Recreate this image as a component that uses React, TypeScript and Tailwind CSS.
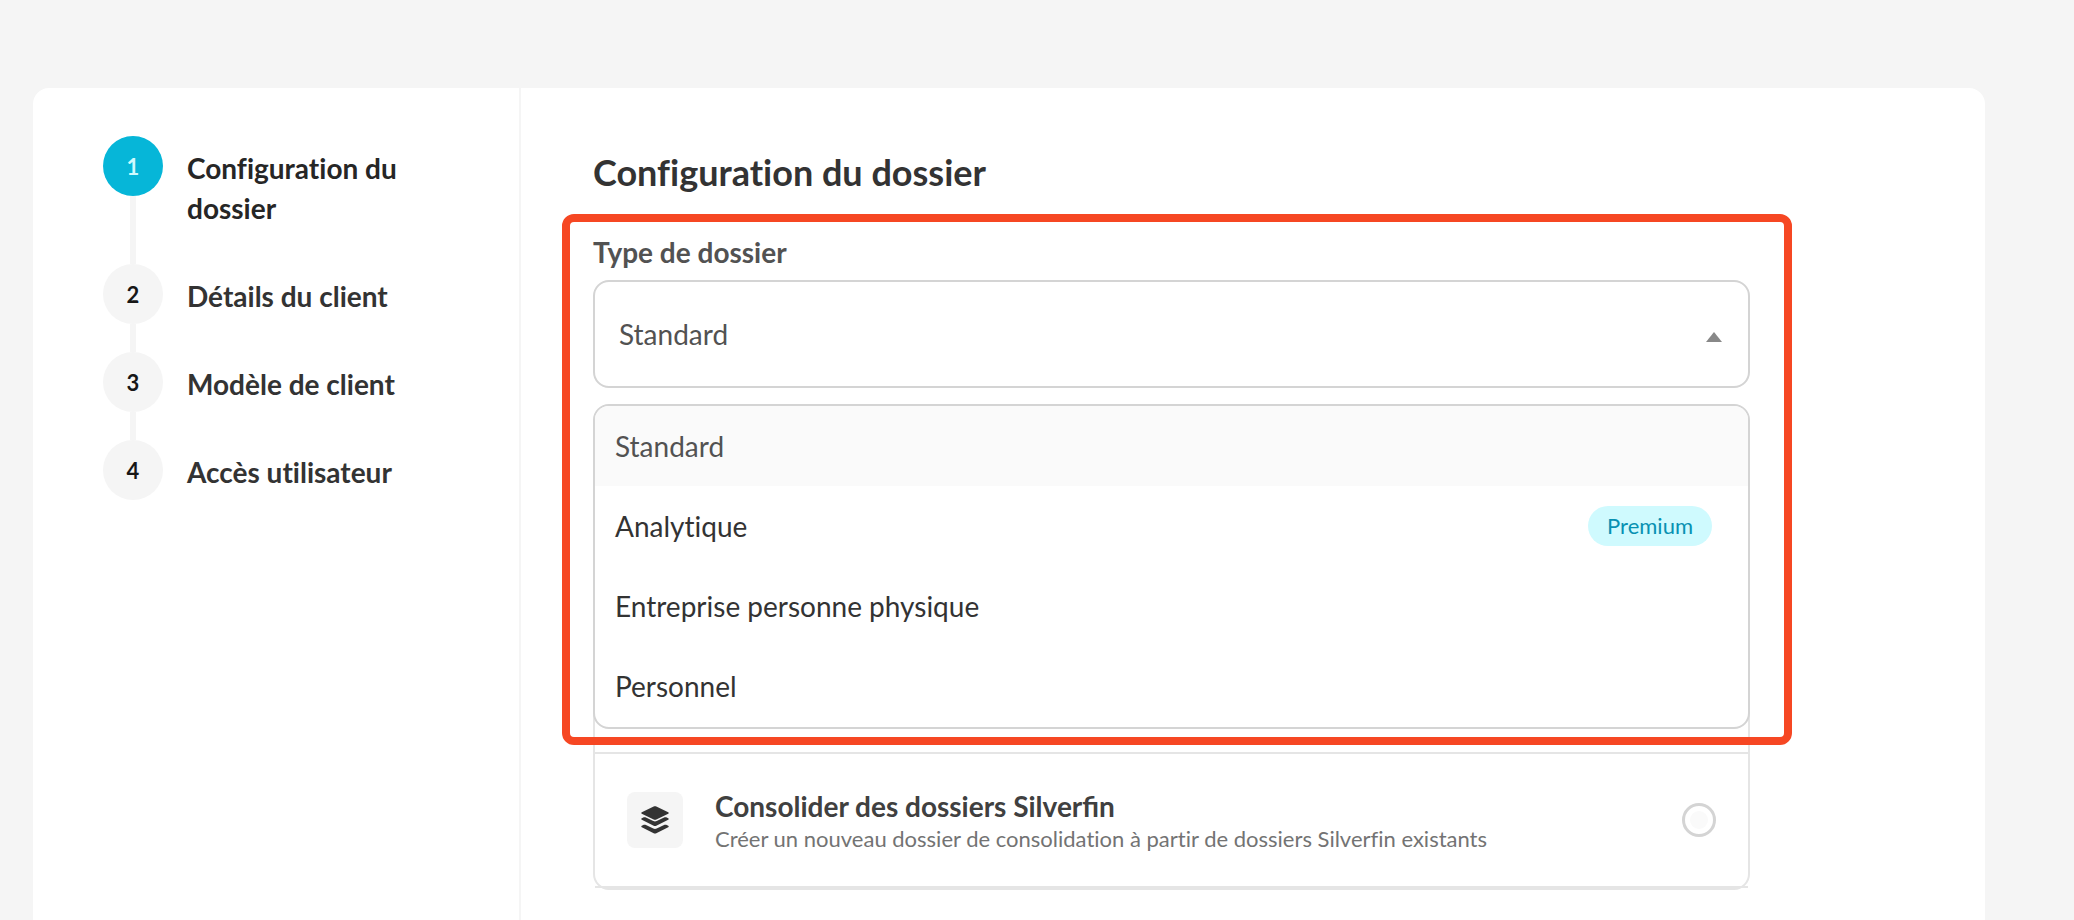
import { useState } from "react";

type FileType = {
  id: string;
  label: string;
  premium?: boolean;
};

const STEPS = [
  "Configuration du dossier",
  "Détails du client",
  "Modèle de client",
  "Accès utilisateur",
];

const FILE_TYPES: FileType[] = [
  { id: "standard", label: "Standard" },
  { id: "analytique", label: "Analytique", premium: true },
  { id: "entreprise", label: "Entreprise personne physique" },
  { id: "personnel", label: "Personnel" },
];

function LayersIcon() {
  return (
    <svg width="28" height="28" viewBox="0 0 28 28" fill="#333333" aria-hidden="true">
      <path d="M13.2 0.3a2 2 0 0 1 1.6 0l12.4 5.9a0.9 0.9 0 0 1 0 1.6l-12.4 5.9a2 2 0 0 1-1.6 0L0.8 7.8a0.9 0.9 0 0 1 0-1.6z" />
      <path d="M0.8 12.2l2-0.9a2 2 0 0 1 1.6 0l7.9 3.7a4 4 0 0 0 3.4 0l7.9-3.7a2 2 0 0 1 1.6 0l2 0.9a0.9 0.9 0 0 1 0 1.6l-12.4 6.1a2 2 0 0 1-1.6 0L0.8 13.8a0.9 0.9 0 0 1 0-1.6z" />
      <path d="M0.8 19.7l2-0.9a2 2 0 0 1 1.6 0l7.9 3.7a4 4 0 0 0 3.4 0l7.9-3.7a2 2 0 0 1 1.6 0l2 0.9a0.9 0.9 0 0 1 0 1.6l-12.4 6.1a2 2 0 0 1-1.6 0L0.8 21.3a0.9 0.9 0 0 1 0-1.6z" />
    </svg>
  );
}

function Stepper({ current }: { current: number }) {
  return (
    <ol className="flex flex-col">
      {STEPS.map((label, i) => (
        <li key={label} className="flex gap-6">
          <div className="flex flex-col items-center">
            <div
              className={
                i === current
                  ? "flex size-[60px] items-center justify-center rounded-full bg-[#06b6d8] text-[22px] font-bold text-[#cffafe]"
                  : "flex size-[60px] items-center justify-center rounded-full bg-[#f5f5f5] text-[22px] font-bold text-[#171717]"
              }
            >
              {i + 1}
            </div>
            {i < STEPS.length - 1 && <div className="w-1.5 flex-1 bg-[#f5f5f5]" />}
          </div>
          <div
            className={
              i === current
                ? "max-w-60 pt-3 pb-9 text-[28px] leading-10 font-bold text-[#262626]"
                : "max-w-60 pt-3 pb-9 text-[28px] leading-10 font-bold text-[#333333]"
            }
          >
            {label}
          </div>
        </li>
      ))}
    </ol>
  );
}

function FileTypeSelect() {
  const [value, setValue] = useState("standard");
  const [open, setOpen] = useState(true);

  return (
    <div className="relative z-10">
      <label
        htmlFor="file-type"
        className="block pb-2 text-[28px] leading-10 font-bold text-[#525252]"
      >
        Type de dossier
      </label>

      <div className="relative">
        <select
          id="file-type"
          value={value}
          onChange={(e) => setValue(e.target.value)}
          onMouseDown={(e) => {
            // the custom list below replaces the native popup
            e.preventDefault();
            setOpen(!open);
          }}
          className="block h-[108px] w-full appearance-none rounded-2xl border-2 border-[#d4d4d4] bg-white px-6 text-[28px] text-[#525252]"
        >
          {FILE_TYPES.map((t) => (
            <option key={t.id} value={t.id}>
              {t.label}
            </option>
          ))}
        </select>
        <svg
          width="16"
          height="10"
          viewBox="0 0 16 10"
          fill="#888888"
          aria-hidden="true"
          className="pointer-events-none absolute right-7 bottom-[46px]"
        >
          <path d={open ? "M8 0l8 10H0z" : "M0 0h16L8 10z"} />
        </svg>

        {open && (
          <ul
            role="listbox"
            className="absolute top-full right-0 left-0 mt-4 overflow-hidden rounded-2xl border-2 border-[#d4d4d4] bg-white pb-px"
          >
            {FILE_TYPES.map((t) => (
              <li key={t.id} role="option" aria-selected={t.id === value}>
                <button
                  type="button"
                  onClick={() => {
                    setValue(t.id);
                    setOpen(false);
                  }}
                  className={
                    t.id === value
                      ? "flex h-20 w-full items-center justify-between bg-[#fafafa] pr-9 pl-5 text-[28px] text-[#525252]"
                      : "flex h-20 w-full items-center justify-between pr-9 pl-5 text-[28px] text-[#333333]"
                  }
                >
                  {t.label}
                  {t.premium && (
                    <span className="rounded-full bg-[#cffafe] px-[19px] py-1 text-[22px] leading-8 text-[#0891b2]">
                      Premium
                    </span>
                  )}
                </button>
              </li>
            ))}
          </ul>
        )}
      </div>

      <div className="pointer-events-none absolute -top-[18px] -right-[42px] -left-[31px] h-[531px] rounded-xl border-8 border-[#f64723]" />
    </div>
  );
}

function CreationOptions() {
  return (
    <div className="mt-24 rounded-2xl border-2 border-[#e5e5e5]">
      <div className="h-[134px] border-b-2 border-[#e5e5e5]" />
      <div className="h-[134px] border-b-2 border-[#e5e5e5]" />
      <label
        htmlFor="consolidate"
        className="flex h-[134px] items-center gap-8 border-b-2 border-[#e5e5e5] px-8"
      >
        <span className="flex size-14 items-center justify-center rounded-lg bg-[#f5f5f5]">
          <LayersIcon />
        </span>
        <span className="flex flex-1 flex-col pt-0.5">
          <span className="text-[28px] leading-9 font-bold text-[#404040] [font-variant-ligatures:normal]">
            Consolider des dossiers Silverfin
          </span>
          <span className="text-[22px] leading-[30px] text-[#737373]">
            Créer un nouveau dossier de consolidation à partir de dossiers Silverfin existants
          </span>
        </span>
        <input
          id="consolidate"
          type="radio"
          name="creation"
          className="grid size-[34px] appearance-none place-items-center rounded-full border-3 border-[#d4d4d4] bg-white before:size-[18px] before:rounded-full before:bg-[#fafafa] checked:before:bg-[#06b6d8]"
        />
      </label>
    </div>
  );
}

export default function App() {
  return (
    <div className="min-h-screen bg-[#f5f5f5] pt-22 pr-[89px] pl-[33px] font-['Lato',sans-serif] [font-variant-ligatures:no-common-ligatures]">
      <div className="flex min-h-[calc(100vh-88px)] rounded-t-2xl bg-white">
        <aside className="w-[488px] shrink-0 border-r-2 border-[#f5f5f5] pt-12 pr-12 pl-[70px]">
          <Stepper current={0} />
        </aside>

        <main className="flex-1 pt-15 pr-[235px] pb-[30px] pl-[72px]">
          <h1 className="pb-9 text-[36px] leading-12 font-bold text-[#333333]">
            Configuration du dossier
          </h1>
          <FileTypeSelect />
          <CreationOptions />
        </main>
      </div>
    </div>
  );
}
